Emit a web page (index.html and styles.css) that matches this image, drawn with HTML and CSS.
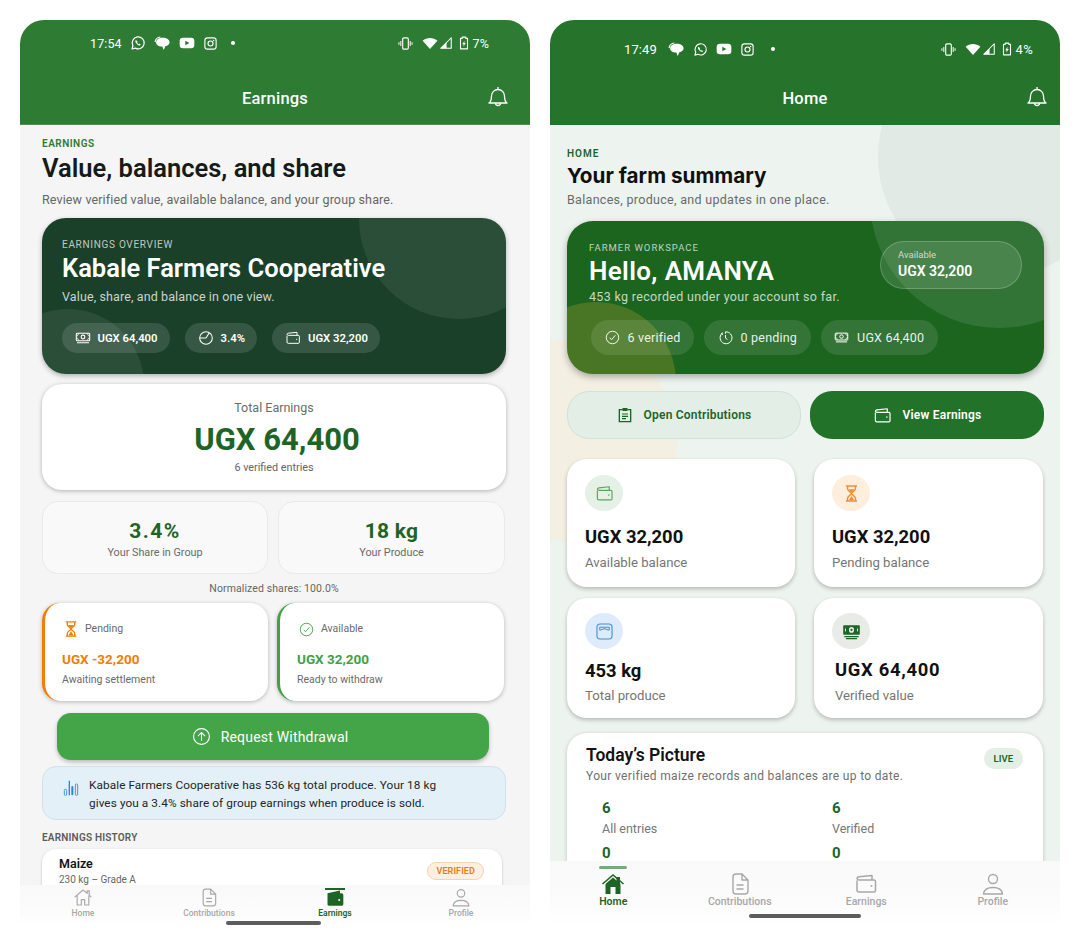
FILE: index.html
```html
<!DOCTYPE html>
<html lang="en">
<head>
<meta charset="utf-8">
<title>Farm app</title>
<link rel="stylesheet" href="styles.css">
</head>
<body>
<svg class="defs" width="0" height="0" aria-hidden="true">
  <symbol id="i-wa" viewBox="0 0 24 24"><path d="M3 21l1.400-4.900A9 9 0 1 1 8 19.700z" fill="none" stroke="currentColor" stroke-width="1.800" stroke-linejoin="round"/><path d="M9 7.500c-1 .7-1.300 1.800-.8 3.100.9 2.200 2.800 4.100 5 5 1.300.5 2.500 0 3.100-1l-2.200-1.700-1.100.9c-1-.5-1.900-1.400-2.400-2.500l.9-1.100z" fill="currentColor"/></symbol>
  <symbol id="i-chat" viewBox="0 0 24 24"><path d="M12.500 4c5.400 0 9.500 2.700 9.500 6.300 0 2.900-2.500 5-6 5.700l-2.300 5-2-4.700C6.500 16.200 3 14 3 10.500 3 6.800 7 4 12.500 4z" fill="currentColor"/><path d="M1.500 10C2 6 5.500 3 9 2.800" fill="none" stroke="currentColor" stroke-width="1.600"/></symbol>
  <symbol id="i-yt" viewBox="0 0 24 24"><rect x="1" y="4" width="22" height="16" rx="5" fill="currentColor"/><path d="M9.500 8.500v7l6-3.500z" fill="#2a7430"/></symbol>
  <symbol id="i-ig" viewBox="0 0 24 24"><rect x="3" y="3" width="18" height="18" rx="4" fill="none" stroke="currentColor" stroke-width="1.800"/><circle cx="12" cy="12" r="4" fill="none" stroke="currentColor" stroke-width="1.800"/><circle cx="17" cy="7" r="1.200" fill="currentColor"/></symbol>
  <symbol id="i-vib" viewBox="0 0 24 24"><rect x="7.500" y="3" width="9" height="18" rx="2" fill="none" stroke="currentColor" stroke-width="1.800"/><path d="M4.500 8v8M1.500 10v4M19.500 8v8M22.500 10v4" stroke="currentColor" stroke-width="1.600" fill="none"/></symbol>
  <symbol id="i-wifi" viewBox="0 0 24 24"><path d="M1 8.500C7 3 17 3 23 8.500L12 21z" fill="currentColor"/></symbol>
  <symbol id="i-sig" viewBox="0 0 24 24"><path d="M21 3v18H3z" fill="none" stroke="currentColor" stroke-width="1.800" stroke-linejoin="round"/><path d="M13 11v10H3z" fill="currentColor"/></symbol>
  <symbol id="i-bat" viewBox="0 0 24 24"><path d="M9 2h6v2h3v18H6V4h3z" fill="none" stroke="currentColor" stroke-width="1.900" stroke-linejoin="round"/><path d="M13 8l-4 6h2.500l-.5 4 4-6h-2.500z" fill="currentColor"/></symbol>
  <symbol id="i-bell" viewBox="0 0 24 24"><path d="M3 18c2-1.500 2.500-3 2.500-7a6.500 6.500 0 0 1 13 0c0 4 .5 5.500 2.500 7z" fill="none" stroke="currentColor" stroke-width="1.300" stroke-linejoin="round"/><path d="M9.500 18a2.500 2.500 0 0 0 5 0M12 2v2.500" fill="none" stroke="currentColor" stroke-width="1.300"/></symbol>
  <symbol id="i-cash" viewBox="0 0 24 24"><rect x="2" y="5" width="20" height="11" rx="1" fill="none" stroke="currentColor" stroke-width="1.600"/><circle cx="12" cy="10.500" r="2.800" fill="none" stroke="currentColor" stroke-width="1.600"/><path d="M2 9c2 0 3-1.500 3-4M22 9c-2 0-3-1.500-3-4M2 12c2 0 3 1.500 3 4M22 12c-2 0-3 1.500-3 4" fill="none" stroke="currentColor" stroke-width="1.300"/><path d="M3 19h18" stroke="currentColor" stroke-width="1.600"/></symbol>
  <symbol id="i-cash-fill" viewBox="0 0 24 24"><rect x="1.500" y="4" width="21" height="12" rx="1" fill="currentColor"/><ellipse cx="12" cy="10" rx="3.200" ry="3.600" fill="#e9ebe6"/><circle cx="12" cy="10" r="1.400" fill="currentColor"/><path d="M3.500 10l1.500-3v6zM20.500 10L19 7v6z" fill="#e9ebe6"/><path d="M3 18.500h18M5 21h14" stroke="currentColor" stroke-width="1.600"/></symbol>
  <symbol id="i-pie" viewBox="0 0 24 24"><circle cx="12" cy="12" r="9.500" fill="none" stroke="currentColor" stroke-width="1.600"/><path d="M12 12l5-8M12 12H2.500" fill="none" stroke="currentColor" stroke-width="1.600"/></symbol>
  <symbol id="i-wallet" viewBox="0 0 24 24"><path d="M3 8.500V18a2 2 0 0 0 2 2h15a1.500 1.500 0 0 0 1.500-1.500v-9A1.500 1.500 0 0 0 20 8H5a2 2 0 0 1-2-1.500C3 5.500 4 5 5 4.800L18 3.500V8" fill="none" stroke="currentColor" stroke-width="1.500" stroke-linejoin="round"/><circle cx="17.500" cy="14" r="1" fill="currentColor"/></symbol>
  <symbol id="i-wallet-fill" viewBox="0 0 24 24"><path d="M3 7l15-3.500V7h2a2 2 0 0 1 2 2v11a2 2 0 0 1-2 2H5a2 2 0 0 1-2-2z" fill="currentColor"/><circle cx="17" cy="15" r="1.200" fill="#fff"/></symbol>
  <symbol id="i-hour" viewBox="0 0 24 24"><path d="M5 2.500h14M5 21.500h14M7 2.500v3.500c0 3 5 4.500 5 6 0-1.500 5-3 5-6V2.500M7 21.500V18c0-3 5-4.500 5-6 0 1.500 5 3 5 6v3.500" fill="none" stroke="currentColor" stroke-width="1.800" stroke-linejoin="round"/><path d="M8 6.500h8L12 11zM8.500 20.500L12 15l3.500 5.500z" fill="currentColor"/></symbol>
  <symbol id="i-check" viewBox="0 0 24 24"><circle cx="12" cy="12" r="10" fill="none" stroke="currentColor" stroke-width="1.500"/><path d="M7.500 12.500l3 3 6-7" fill="none" stroke="currentColor" stroke-width="1.500"/></symbol>
  <symbol id="i-timer" viewBox="0 0 24 24"><path d="M8 4.300A9.500 9.500 0 1 0 12 3v3" fill="none" stroke="currentColor" stroke-width="1.600"/><path d="M12 8v5l3 2M7.500 8l-2-3" fill="none" stroke="currentColor" stroke-width="1.600"/></symbol>
  <symbol id="i-up" viewBox="0 0 24 24"><circle cx="12" cy="12" r="10" fill="none" stroke="currentColor" stroke-width="1.400"/><path d="M12 17.500V7M7.500 11.500L12 7l4.500 4.500" fill="none" stroke="currentColor" stroke-width="1.400"/></symbol>
  <symbol id="i-bars" viewBox="0 0 24 24"><rect x="2" y="14" width="3.500" height="9" rx="1.500" fill="none" stroke="currentColor" stroke-width="1.300"/><path d="M9.500 1v22" stroke="currentColor" stroke-width="2"/><rect x="12.500" y="9" width="3" height="14" rx="1.500" fill="currentColor"/><rect x="18.500" y="6" width="3.500" height="17" rx="1.500" fill="none" stroke="currentColor" stroke-width="1.300"/></symbol>
  <symbol id="i-home" viewBox="0 0 24 24"><path d="M2 11.500L12 3l5 4V4h2.500v5.500L22 11.500M5 9.500V21h5v-6.500h4V21h5V9.500" fill="none" stroke="currentColor" stroke-width="1.400" stroke-linejoin="round"/></symbol>
  <symbol id="i-home-fill" viewBox="0 0 24 24"><path d="M1.500 12L12 3l10.500 9" fill="none" stroke="currentColor" stroke-width="1.600"/><path d="M4.500 12L12 5.500l3.500 3V5H19v6.500l.5.500v10h-5v-7h-5v7h-5z" fill="currentColor"/></symbol>
  <symbol id="i-doc" viewBox="0 0 24 24"><path d="M5 5a3 3 0 0 1 3-3h6l6 6v11a3 3 0 0 1-3 3H8a3 3 0 0 1-3-3zM14 2v6h6M8.500 13h7M8.500 17h7" fill="none" stroke="currentColor" stroke-width="1.400" stroke-linejoin="round"/></symbol>
  <symbol id="i-user" viewBox="0 0 24 24"><circle cx="12" cy="7" r="4.500" fill="none" stroke="currentColor" stroke-width="1.400"/><path d="M2.500 22c.5-4.500 4.500-6.500 9.500-6.500s9 2 9.500 6.500z" fill="none" stroke="currentColor" stroke-width="1.400" stroke-linejoin="round"/></symbol>
  <symbol id="i-clip" viewBox="0 0 24 24"><path d="M8 4H3.500v18h17V4H16" fill="none" stroke="currentColor" stroke-width="2"/><rect x="8" y="1.500" width="8" height="4.500" rx="1" fill="currentColor"/><path d="M7.500 10.500h9M7.500 14h9M7.500 17.500h6" stroke="currentColor" stroke-width="1.800"/></symbol>
  <symbol id="i-scale" viewBox="0 0 24 24"><rect x="2.500" y="2.500" width="19" height="19" rx="4" fill="none" stroke="currentColor" stroke-width="1.400"/><path d="M6 6.500h12v3.500c-1.500 1-3-1.500-6-1.500S7.500 11 6 10z" fill="none" stroke="currentColor" stroke-width="1.300" stroke-linejoin="round"/></symbol>
</svg>

<main class="phones">
  <section class="phone phone-a">
    <header class="appbar appbar-a">
      <div class="status status-a">
        <div class="status-side">
          <span class="clock">17:54</span>
          <svg class="si si-16"><use href="#i-wa"/></svg>
          <svg class="si si-17"><use href="#i-chat"/></svg>
          <svg class="si si-16"><use href="#i-yt"/></svg>
          <svg class="si si-15"><use href="#i-ig"/></svg>
          <span class="sdot"></span>
        </div>
        <div class="status-side status-right">
          <svg class="si si-15 vib"><use href="#i-vib"/></svg>
          <svg class="si si-16"><use href="#i-wifi"/></svg>
          <svg class="si si-14 tight"><use href="#i-sig"/></svg>
          <svg class="si si-14"><use href="#i-bat"/></svg>
          <span class="pct">7%</span>
        </div>
      </div>
      <div class="titlebar">
        <h2 class="apptitle">Earnings</h2>
        <svg class="bell"><use href="#i-bell"/></svg>
      </div>
    </header>

    <div class="content content-a">
      <p class="eyebrow">EARNINGS</p>
      <h1 class="page-title">Value, balances, and share</h1>
      <p class="page-sub">Review verified value, available balance, and your group share.</p>

      <div class="hero hero-a">
        <span class="blob blob-a1"></span>
        <span class="blob blob-a2"></span>
        <p class="hero-label">EARNINGS OVERVIEW</p>
        <h2 class="hero-name">Kabale Farmers Cooperative</h2>
        <p class="hero-sub">Value, share, and balance in one view.</p>
        <div class="chips chips-a">
          <span class="chip"><svg class="chip-ic"><use href="#i-cash"/></svg>UGX 64,400</span>
          <span class="chip"><svg class="chip-ic"><use href="#i-pie"/></svg>3.4%</span>
          <span class="chip"><svg class="chip-ic"><use href="#i-wallet"/></svg>UGX 32,200</span>
        </div>
      </div>

      <div class="total-card">
        <p class="total-label">Total Earnings</p>
        <p class="total-value">UGX 64,400</p>
        <p class="total-note">6 verified entries</p>
      </div>

      <div class="stat-row">
        <div class="stat"><p class="stat-value stat-wide">3.4%</p><p class="stat-label">Your Share in Group</p></div>
        <div class="stat"><p class="stat-value">18 kg</p><p class="stat-label">Your Produce</p></div>
      </div>

      <p class="normal">Normalized shares: 100.0%</p>

      <div class="bal-row">
        <div class="bal bal-pending">
          <div class="bal-head"><svg class="bal-ic"><use href="#i-hour"/></svg>Pending</div>
          <p class="bal-value">UGX -32,200</p>
          <p class="bal-note">Awaiting settlement</p>
        </div>
        <div class="bal bal-ok">
          <div class="bal-head"><svg class="bal-ic"><use href="#i-check"/></svg>Available</div>
          <p class="bal-value">UGX 32,200</p>
          <p class="bal-note">Ready to withdraw</p>
        </div>
      </div>

      <button class="withdraw"><svg class="withdraw-ic"><use href="#i-up"/></svg>Request Withdrawal</button>

      <div class="info">
        <svg class="info-ic"><use href="#i-bars"/></svg>
        <p class="info-text">Kabale Farmers Cooperative has 536 kg total produce. Your 18 kg gives you a 3.4% share of group earnings when produce is sold.</p>
      </div>

      <p class="hist-title">EARNINGS HISTORY</p>
      <div class="hist-card">
        <div><p class="hist-name">Maize</p><p class="hist-sub">230 kg – Grade A</p></div>
        <span class="badge">VERIFIED</span>
      </div>
    </div>

    <nav class="nav nav-a">
      <a class="nav-item"><svg class="nav-ic"><use href="#i-home"/></svg>Home</a>
      <a class="nav-item"><svg class="nav-ic"><use href="#i-doc"/></svg>Contributions</a>
      <a class="nav-item active"><span class="nav-bar"></span><svg class="nav-ic"><use href="#i-wallet-fill"/></svg>Earnings</a>
      <a class="nav-item"><svg class="nav-ic"><use href="#i-user"/></svg>Profile</a>
    </nav>
    <span class="indicator"></span>
  </section>

  <section class="phone phone-b">
    <header class="appbar appbar-b">
      <div class="status status-b">
        <div class="status-side">
          <span class="clock">17:49</span>
          <svg class="si si-17"><use href="#i-chat"/></svg>
          <svg class="si si-15"><use href="#i-wa"/></svg>
          <svg class="si si-16"><use href="#i-yt"/></svg>
          <svg class="si si-15"><use href="#i-ig"/></svg>
          <span class="sdot"></span>
        </div>
        <div class="status-side status-right">
          <svg class="si si-15 vib"><use href="#i-vib"/></svg>
          <svg class="si si-16"><use href="#i-wifi"/></svg>
          <svg class="si si-14 tight"><use href="#i-sig"/></svg>
          <svg class="si si-14"><use href="#i-bat"/></svg>
          <span class="pct">4%</span>
        </div>
      </div>
      <div class="titlebar titlebar-b">
        <h2 class="apptitle">Home</h2>
        <svg class="bell"><use href="#i-bell"/></svg>
      </div>
    </header>

    <div class="content content-b">
      <span class="deco deco-1"></span>
      <span class="deco deco-2"></span>
      <p class="eyebrow eyebrow-b">HOME</p>
      <h1 class="page-title-b">Your farm summary</h1>
      <p class="page-sub-b">Balances, produce, and updates in one place.</p>

      <div class="hero hero-b">
        <span class="blob blob-b1"></span>
        <span class="blob blob-b2"></span>
        <div class="avail"><p class="avail-label">Available</p><p class="avail-value">UGX 32,200</p></div>
        <p class="hero-label hero-label-b">FARMER WORKSPACE</p>
        <h2 class="hero-name hero-name-b">Hello, AMANYA</h2>
        <p class="hero-sub hero-sub-b">453 kg recorded under your account so far.</p>
        <div class="chips chips-b">
          <span class="chip chip-b"><svg class="chip-ic"><use href="#i-check"/></svg>6 verified</span>
          <span class="chip chip-b"><svg class="chip-ic"><use href="#i-timer"/></svg>0 pending</span>
          <span class="chip chip-b"><svg class="chip-ic"><use href="#i-cash"/></svg>UGX 64,400</span>
        </div>
      </div>

      <div class="actions">
        <button class="act act-light"><svg class="act-ic"><use href="#i-clip"/></svg>Open Contributions</button>
        <button class="act act-dark"><svg class="act-ic act-ic-w"><use href="#i-wallet"/></svg>View Earnings</button>
      </div>

      <div class="metrics">
        <div class="metric m-tall">
          <span class="m-ic m-green"><svg class="m-svg"><use href="#i-wallet"/></svg></span>
          <p class="m-value">UGX 32,200</p><p class="m-label">Available balance</p>
        </div>
        <div class="metric m-tall">
          <span class="m-ic m-orange"><svg class="m-svg"><use href="#i-hour"/></svg></span>
          <p class="m-value">UGX 32,200</p><p class="m-label">Pending balance</p>
        </div>
        <div class="metric m-short">
          <span class="m-ic m-blue"><svg class="m-svg"><use href="#i-scale"/></svg></span>
          <p class="m-value">453 kg</p><p class="m-label">Total produce</p>
        </div>
        <div class="metric m-short m-alt">
          <span class="m-ic m-grey"><svg class="m-svg"><use href="#i-cash-fill"/></svg></span>
          <p class="m-value">UGX 64,400</p><p class="m-label">Verified value</p>
        </div>
      </div>

      <div class="today">
        <div class="today-head">
          <div><h3 class="today-title">Today’s Picture</h3><p class="today-sub">Your verified maize records and balances are up to date.</p></div>
          <span class="live">LIVE</span>
        </div>
        <div class="today-grid">
          <div><p class="t-num">6</p><p class="t-label">All entries</p></div>
          <div><p class="t-num">6</p><p class="t-label">Verified</p></div>
          <div><p class="t-num">0</p></div>
          <div><p class="t-num">0</p></div>
        </div>
      </div>
    </div>

    <nav class="nav nav-b">
      <a class="nav-item active"><span class="nav-bar"></span><svg class="nav-ic"><use href="#i-home-fill"/></svg>Home</a>
      <a class="nav-item"><svg class="nav-ic"><use href="#i-doc"/></svg>Contributions</a>
      <a class="nav-item"><svg class="nav-ic"><use href="#i-wallet"/></svg>Earnings</a>
      <a class="nav-item"><svg class="nav-ic"><use href="#i-user"/></svg>Profile</a>
    </nav>
    <span class="indicator indicator-b"></span>
  </section>
</main>
</body>
</html>
```

FILE: styles.css
```css
* { box-sizing: border-box; }
html, body { margin: 0; padding: 0; background: #fff; }
body { font-family: Roboto, "Liberation Sans", sans-serif; color: #141414; height: 946px; overflow: hidden; }
p, h1, h2, h3 { margin: 0; font-weight: 400; }
svg { display: block; }
.defs { position: absolute; }

.phones { display: flex; gap: 20px; padding: 20px 20px 0; }
.phone { position: relative; width: 510px; height: 906px; display: flex; flex-direction: column; overflow: hidden; border-radius: 24px 24px 0 0; background: #fff; }

.appbar { height: 105px; flex: none; color: #fff; }
.appbar-a { background: #2e7b34; border-bottom: 1px solid #4a9150; }
.appbar-b { background: #26742b; }
.status { display: flex; justify-content: space-between; align-items: center; height: 16px; }
.status-a { margin-top: 15px; padding: 0 41px 0 70px; }
.status-b { margin-top: 21px; padding: 0 27px 0 74px; }
.status-side { display: flex; align-items: center; gap: 8px; }
.status-right { gap: 4px; }
.clock, .pct { font-size: 12.500px; font-weight: 400; letter-spacing: .1px; }
.status-b .clock { margin-right: 3px; font-size: 13px; }
.status-b .pct { font-size: 13px; letter-spacing: .3px; }
.pct { margin-left: -2px; }
.si { color: #fff; }
.si-14 { width: 14px; height: 14px; }
.si-15 { width: 15px; height: 15px; }
.si-16 { width: 16px; height: 16px; }
.si-17 { width: 17px; height: 17px; }
.tight { margin-left: -3px; }
.vib { margin-right: 5px; }
.sdot { width: 4px; height: 4px; border-radius: 50%; background: #fff; margin-left: 5px; }
.status-b .sdot { margin-left: 8px; }
.titlebar { display: flex; align-items: center; justify-content: center; position: relative; height: 24px; margin-top: 35px; }
.titlebar-b { margin-top: 29px; }
.apptitle { font-size: 16.500px; font-weight: 500; letter-spacing: .2px; }
.bell { position: absolute; right: 20px; top: -1px; width: 24px; height: 24px; color: #fff; }
.titlebar-b .bell { right: 11px; }

.content { flex: 1; min-height: 0; overflow: hidden; position: relative; }
.content-a { background: #f4f5f4; padding: 13px 24px 0 22px; }
.content-b { background: #edf3ef; padding: 23px 16px 0 17px; }

.eyebrow { font-size: 10px; line-height: 12px; font-weight: 600; letter-spacing: .5px; color: #2e7b34; }
.page-title { font-size: 25.500px; line-height: 30px; font-weight: 600; margin-top: 3px; color: #161a18; }
.page-sub { font-size: 12.500px; line-height: 16px; margin-top: 9px; color: #666; letter-spacing: .13px; }

.hero { position: relative; overflow: hidden; color: #fff; box-shadow: 0 2px 5px rgba(0,0,0,.28); }
.hero > *:not(.blob) { position: relative; }
.hero-a { height: 156px; margin-top: 10px; border-radius: 24px; background: #1a4029; padding: 21px 20px 0; }
.blob { position: absolute; border-radius: 50%; }
.blob-a1 { left: 317px; top: -99px; width: 200px; height: 200px; background: rgba(255,255,255,.075); }
.blob-a2 { left: -50px; top: 91px; width: 152px; height: 152px; background: rgba(255,255,255,.075); }
.hero-label { font-size: 10px; line-height: 12px; letter-spacing: .7px; color: rgba(255,255,255,.72); }
.hero-name { font-size: 25.500px; line-height: 30px; font-weight: 600; margin-top: 2px; }
.hero-sub { font-size: 12.500px; line-height: 16px; margin-top: 6px; color: rgba(255,255,255,.78); letter-spacing: .12px; }
.chips { display: flex; }
.chips-a { gap: 15px; margin-top: 18px; }
.chip { display: flex; align-items: center; height: 30px; padding: 0 12.500px; gap: 7px; border-radius: 15px; background: rgba(255,255,255,.12); font-size: 11.300px; font-weight: 600; }
.chip-ic { width: 16px; height: 16px; color: #fff; }

.total-card { height: 106px; margin-top: 10px; background: #fff; border-radius: 20px; box-shadow: 0 1px 4px rgba(0,0,0,.28); display: flex; flex-direction: column; align-items: center; padding-top: 16px; }
.total-label { font-size: 12.500px; line-height: 16px; color: #6c6c6c; }
.total-value { font-size: 31px; line-height: 36px; font-weight: 700; color: #1f6427; margin: 6px 0 0 6px; }
.total-note { font-size: 10.800px; line-height: 14px; color: #666; margin-top: 3px; }

.stat-row { display: grid; grid-template-columns: 226px 227px; gap: 10px; margin-top: 11px; }
.stat { height: 73px; border: 1px solid #e9ebe9; border-radius: 16px; background: #f8f9f8; display: flex; flex-direction: column; align-items: center; padding-top: 16px; }
.stat-value { font-size: 21px; line-height: 26px; font-weight: 700; color: #1f6427; letter-spacing: .2px; }
.stat-wide { letter-spacing: 1.500px; }
.stat-label { font-size: 10.800px; line-height: 14px; color: #6a6a6a; margin-top: 2px; }

.normal { text-align: center; font-size: 10.500px; line-height: 14px; color: #666; margin-top: 8px; letter-spacing: .1px; }

.bal-row { display: grid; grid-template-columns: 226px 227px; gap: 9px; margin-top: 7px; }
.bal { height: 98px; background: #fff; border-radius: 18px; box-shadow: 0 1px 4px rgba(0,0,0,.26); padding: 18px 0 0 17px; border-left: 3.500px solid; }
.bal-pending { border-left-color: #f57c00; }
.bal-ok { border-left-color: #43a047; }
.bal-head { display: flex; align-items: center; gap: 7px; font-size: 10.500px; line-height: 16px; height: 16px; color: #6a6a6a; margin-left: 2px; }
.bal-ic { width: 15px; height: 15px; }
.bal-pending .bal-head { margin-left: 0; gap: 5px; }
.bal-pending .bal-ic { color: #f57c00; width: 18px; height: 18px; flex: none; }
.bal-ok .bal-ic { color: #43a047; }
.bal-value { font-size: 13.500px; line-height: 16px; font-weight: 700; margin-top: 14px; }
.bal-pending .bal-value { color: #f57c00; }
.bal-ok .bal-value { color: #43a047; }
.bal-note { font-size: 10.500px; line-height: 14px; color: #6a6a6a; margin-top: 6px; }

.withdraw { display: flex; align-items: center; justify-content: center; gap: 10px; width: 432px; height: 47px; margin: 12px 0 0 15px; padding: 0 6px 0 0; border: 0; border-radius: 14px; background: #43a548; color: #fff; font: 400 14px Roboto, sans-serif; letter-spacing: .2px; box-shadow: 0 2px 4px rgba(0,0,0,.25); }
.withdraw-ic { width: 19px; height: 19px; color: #fff; }

.info { display: flex; align-items: flex-start; gap: 10px; height: 54px; margin-top: 6px; padding: 9px 12px 0 20px; background: #e3f0f8; border: 1px solid #cfe0ee; border-radius: 14px; width: 464px; }
.info-ic { width: 16px; height: 18px; color: #2c88d9; flex: none; margin-top: 3px; }
.info-text { font-size: 11.800px; line-height: 18px; color: #262626; width: 360px; letter-spacing: .08px; }

.hist-title { font-size: 10px; line-height: 14px; font-weight: 600; letter-spacing: .2px; color: #5c5c5c; margin-top: 11px; }
.hist-card { display: flex; justify-content: space-between; align-items: center; height: 60px; width: 460px; margin-top: 4px; padding: 6px 18px 22px 17px; background: #fff; border-radius: 14px; box-shadow: 0 1px 3px rgba(0,0,0,.2); }
.hist-name { font-size: 12.500px; line-height: 16px; font-weight: 600; }
.hist-sub { font-size: 10px; line-height: 14px; color: #666; margin-top: 1px; }
.badge { font-size: 9px; line-height: 16px; font-weight: 600; letter-spacing: .1px; color: #ec7a14; background: #fdf0e3; border: 1px solid #f8d3ad; border-radius: 9px; padding: 0 8px; }

.nav { flex: none; display: grid; grid-template-columns: repeat(4, 1fr); background: linear-gradient(#f9f9f9, #fcfcfc 70%, #fff); position: relative; z-index: 1; }
.nav-a { height: 41px; padding-right: 6px; }
.nav-b { height: 65px; padding-right: 4px; }
.nav-item { position: relative; display: flex; flex-direction: column; align-items: center; color: #a8a8a8; font-weight: 500; }
.nav-a .nav-item { font-size: 8.500px; line-height: 10px; padding-top: 2px; }
.nav-b .nav-item { font-size: 10.500px; line-height: 12px; padding-top: 11px; }
.nav-a .nav-ic { width: 20px; height: 21px; margin-bottom: 0; }
.nav-b .nav-ic { width: 24px; height: 24px; margin-bottom: 0; }
.nav-item.active { color: #1f6427; font-weight: 600; }
.nav-bar { position: absolute; top: 3px; height: 2px; width: 20px; background: #1f6427; }
.nav-b .nav-bar { top: 5px; height: 3px; width: 28px; background: #7aa97d; border-radius: 2px; }
.indicator { position: absolute; left: 206px; bottom: 1px; width: 95px; height: 4px; border-radius: 2px; background: #5d5d5d; z-index: 2; }
.indicator-b { left: 199px; width: 112px; bottom: 8px; height: 4px; }

.deco { position: absolute; border-radius: 50%; }
.deco-1 { left: 328px; top: -88px; width: 240px; height: 240px; background: #e1eae4; }
.deco-2 { left: -77px; top: 213px; width: 204px; height: 204px; background: #f3efe2; }
.content-b > *:not(.deco) { position: relative; }
.eyebrow-b { color: #1f6427; letter-spacing: 1px; }
.page-title-b { font-family: Inter, Roboto, sans-serif; font-size: 20.700px; line-height: 24px; font-weight: 700; margin-top: 4px; color: #101010; }
.page-sub-b { font-size: 12.500px; line-height: 16px; margin-top: 4px; color: #6a6a6a; letter-spacing: .3px; }
.content-b > .hero-b { position: relative; }
.hero-b { height: 153px; margin-top: 13px; border-radius: 26px; background: #1b651f; padding: 21px 22px 0; width: 477px; box-shadow: 0 3px 7px rgba(0,0,0,.3); }
.blob-b1 { left: 303px; top: -151px; width: 258px; height: 258px; background: rgba(255,255,255,.1); }
.blob-b2 { left: -51px; top: 81px; width: 160px; height: 160px; background: rgba(255,190,60,.2); }
.hero > .avail { position: absolute; left: 313px; top: 20px; width: 142px; height: 48px; border-radius: 24px; border: 1px solid rgba(255,255,255,.2); background: rgba(255,255,255,.12); padding: 7px 0 0 17px; }
.avail-label { font-size: 9.500px; line-height: 12px; color: rgba(255,255,255,.72); }
.avail-value { font-size: 14px; line-height: 18px; font-weight: 600; margin-top: 1px; }
.hero-label-b { font-size: 9.500px; letter-spacing: 1px; }
.hero-name-b { font-size: 26px; line-height: 30px; margin-top: 2px; letter-spacing: .35px; }
.hero-sub-b { font-size: 12.500px; line-height: 16px; margin-top: 3px; letter-spacing: .32px; color: rgba(255,255,255,.75); }
.chips-b { gap: 10px; margin-top: 15px; margin-left: 2px; }
.chip-b { height: 35px; border-radius: 18px; padding: 0 13.500px; gap: 8px; font-size: 12.500px; font-weight: 400; letter-spacing: .2px; background: rgba(255,255,255,.11); color: rgba(255,255,255,.92); }
.chip-b .chip-ic { width: 15px; height: 15px; }

.actions { display: grid; grid-template-columns: 234px 234px; gap: 9px; margin-top: 17px; }
.act { display: flex; align-items: center; justify-content: center; gap: 11px; height: 48px; border-radius: 22px; font: 600 12px Roboto, sans-serif; letter-spacing: .2px; }
.act-light { background: #e3eee6; border: 1px solid #d3e2d6; color: #1f6427; }
.act-dark { background: #22722a; border: 0; color: #fff; }
.act-ic { width: 16px; height: 16px; color: #1f6427; }
.act-ic-w { width: 19px; height: 19px; color: #fff; }

.metrics { display: grid; grid-template-columns: 228px 229px; gap: 11px 19px; margin-top: 20px; }
.metric { background: #fff; border-radius: 20px; box-shadow: 0 2px 4px rgba(0,0,0,.24); padding: 16px 0 0 18px; }
.m-tall { height: 128px; }
.m-short { height: 120px; padding-top: 15px; }
.m-ic { display: flex; align-items: center; justify-content: center; width: 38px; height: 36px; border-radius: 50%; }
.m-svg { width: 19px; height: 19px; }
.m-green { background: #e5f1e6; color: #5aa85f; }
.m-orange { background: #fdeedd; color: #f09030; }
.m-blue { background: #deebfa; color: #3f8fd8; }
.m-grey { background: #e9ebe6; color: #1f6427; }
.m-value { font-size: 18.400px; line-height: 22px; font-weight: 700; color: #111; margin-top: 15px; }
.m-label { font-size: 13.200px; line-height: 16px; color: #757575; margin-top: 7px; }
.m-short .m-value { margin-top: 11px; }
.m-short .m-label { margin-top: 6px; }
.m-short.m-alt .m-value { margin: 10px 0 0 3px; letter-spacing: .7px; }
.m-short.m-alt .m-label { margin: 7px 0 0 3px; }

.today { width: 476px; height: 180px; margin-top: 15px; background: #fff; border-radius: 20px; box-shadow: 0 1px 4px rgba(0,0,0,.2); padding: 12px 20px 0 19px; }
.today-head { display: flex; justify-content: space-between; align-items: flex-start; }
.today-title { font-size: 17.500px; line-height: 20px; font-weight: 600; }
.today-sub { font-size: 12px; line-height: 16px; color: #6f6f6f; margin-top: 3px; letter-spacing: .33px; }
.live { font-size: 9.500px; line-height: 21px; font-weight: 600; color: #1f6427; background: #e3efe5; padding: 0 10px; border-radius: 11px; margin-top: 3px; }
.today-grid { display: grid; grid-template-columns: 230px 1fr; margin: 15px 0 0 16px; }
.t-num { font-size: 15px; line-height: 18px; font-weight: 700; color: #1f6427; margin-bottom: 4px; }
.t-label { font-size: 12.500px; line-height: 16px; color: #777; margin-bottom: 7px; }
```
